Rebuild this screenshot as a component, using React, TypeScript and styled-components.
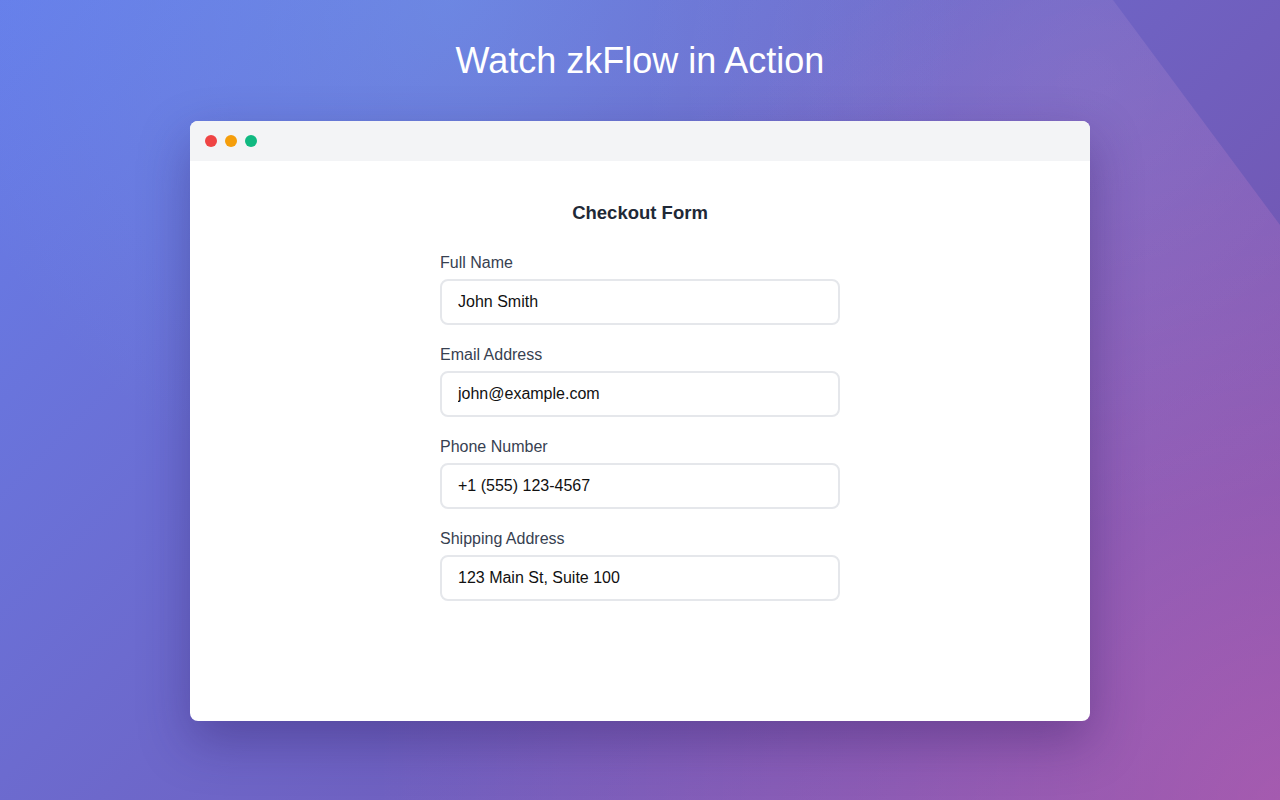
import React from "react";
import styled, { createGlobalStyle } from "styled-components";

const GlobalStyle = createGlobalStyle`
  html, body { margin: 0; padding: 0; }
  body {
    font-family: "Liberation Sans", Arial, sans-serif;
    width: 1280px;
    height: 800px;
    overflow: hidden;
  }
  * { box-sizing: border-box; }
`;

const Page = styled.div`
  position: relative;
  width: 1280px;
  height: 800px;
  overflow: hidden;
  background: linear-gradient(135deg, #667eea 0%, #764ba2 100%);
  display: flex;
  flex-direction: column;
  align-items: center;
  padding-top: 39px;
`;

const Glow = styled.div`
  position: absolute;
  inset: 0;
  clip-path: polygon(0 0, 1113px 0, 1280px 225px, 1280px 800px, 0 800px);
  background:
    radial-gradient(circle at 100% 100%, rgba(255, 120, 200, 0.34) 0%, rgba(255, 120, 200, 0) 60%),
    radial-gradient(circle at 35% 0%, rgba(120, 205, 255, 0.22) 0%, rgba(120, 205, 255, 0) 45%),
    radial-gradient(circle at 85% 10%, rgba(255, 255, 255, 0.08) 0%, rgba(255, 255, 255, 0) 35%);
`;

const Title = styled.h1`
  position: relative;
  margin: 0 0 39px;
  font-size: 36px;
  font-weight: 400;
  line-height: 43px;
  color: #ffffff;
`;

const Window = styled.div`
  position: relative;
  width: 900px;
  height: 600px;
  background: #ffffff;
  border-radius: 8px;
  overflow: hidden;
  box-shadow: 0 20px 50px rgba(40, 20, 90, 0.35);
  display: flex;
  flex-direction: column;
`;

const TitleBar = styled.div`
  height: 40px;
  background: #f3f4f6;
  display: flex;
  align-items: center;
  gap: 8px;
  padding-left: 15px;
`;

const Dot = styled.span<{ $color: string }>`
  width: 12px;
  height: 12px;
  border-radius: 50%;
  background: ${(p) => p.$color};
`;

const Content = styled.div`
  flex: 1;
  display: flex;
  flex-direction: column;
  align-items: center;
  padding-top: 40px;
`;

const Form = styled.form`
  width: 400px;
  display: flex;
  flex-direction: column;
  gap: 20px;
`;

const FormTitle = styled.h2`
  margin: 0 0 8px;
  text-align: center;
  font-size: 18.5px;
  line-height: 24px;
  font-weight: 700;
  color: #1f2937;
`;

const Field = styled.div`
  display: flex;
  flex-direction: column;
  gap: 6px;
`;

const Label = styled.label`
  font-size: 16px;
  line-height: 20px;
  color: #374151;
`;

const Input = styled.input`
  width: 100%;
  height: 46px;
  padding: 0 16px;
  border: 2px solid #e5e7eb;
  border-radius: 8px;
  font-family: "Liberation Sans", Arial, sans-serif;
  font-size: 16px;
  color: #111111;
  background: #ffffff;
  outline: none;
`;

const fields = [
  { id: "name", label: "Full Name", value: "John Smith" },
  { id: "email", label: "Email Address", value: "john@example.com" },
  { id: "phone", label: "Phone Number", value: "+1 (555) 123-4567" },
  { id: "address", label: "Shipping Address", value: "123 Main St, Suite 100" },
];

export default function App() {
  return (
    <>
      <GlobalStyle />
      <Page>
        <Glow />
        <Title>Watch zkFlow in Action</Title>
        <Window>
          <TitleBar>
            <Dot $color="#ef4444" />
            <Dot $color="#f59e0b" />
            <Dot $color="#10b981" />
          </TitleBar>
          <Content>
            <Form onSubmit={(e) => e.preventDefault()}>
              <FormTitle>Checkout Form</FormTitle>
              {fields.map((f) => (
                <Field key={f.id}>
                  <Label htmlFor={f.id}>{f.label}</Label>
                  <Input id={f.id} defaultValue={f.value} readOnly />
                </Field>
              ))}
            </Form>
          </Content>
        </Window>
      </Page>
    </>
  );
}
